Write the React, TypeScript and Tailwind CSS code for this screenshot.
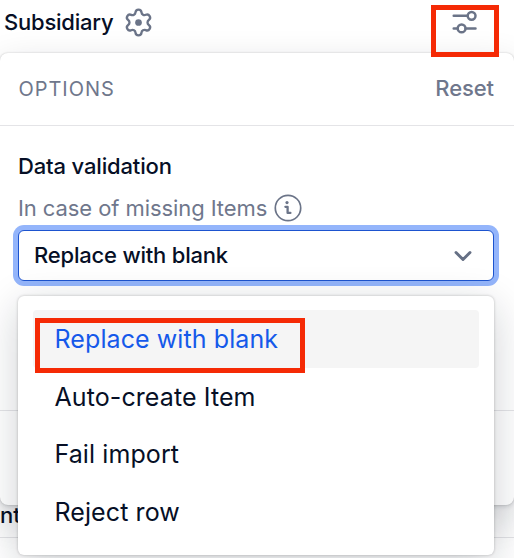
import { useState } from "react";
import clsx from "clsx";
import { ChevronDown } from "lucide-react";

const OPTIONS = ["Replace with blank", "Auto-create Item", "Fail import", "Reject row"];

function GearIcon() {
  return (
    <svg
      width="31"
      height="31"
      viewBox="0 0 24 24"
      fill="none"
      stroke="#6b7488"
      strokeWidth="1.8"
      strokeLinejoin="round"
    >
      <path d="M9.671 4.136a2.34 2.34 0 0 1 4.659 0 2.34 2.34 0 0 0 3.319 1.915 2.34 2.34 0 0 1 2.33 4.033 2.34 2.34 0 0 0 0 3.831 2.34 2.34 0 0 1-2.33 4.033 2.34 2.34 0 0 0-3.319 1.915 2.34 2.34 0 0 1-4.659 0 2.34 2.34 0 0 0-3.32-1.915 2.34 2.34 0 0 1-2.33-4.033 2.34 2.34 0 0 0 0-3.831A2.34 2.34 0 0 1 6.35 6.051a2.34 2.34 0 0 0 3.319-1.915" />
      <circle cx="12" cy="12" r="2.6" fill="#6b7488" stroke="none" />
    </svg>
  );
}

function SlidersIcon() {
  return (
    <svg
      width="26"
      height="26"
      viewBox="0 0 26 26"
      fill="none"
      stroke="#6b7488"
      strokeWidth="2.5"
      strokeLinecap="round"
    >
      <path d="M2.7 6.8H16.6M2.7 19.4H6.6M14.6 19.4H24.5" />
      <circle cx="20.6" cy="6.8" r="3.9" />
      <circle cx="10.6" cy="19.4" r="3.9" />
    </svg>
  );
}

function InfoIcon() {
  return (
    <svg width="28" height="28" viewBox="0 0 28 28" fill="none" stroke="#6b7488" strokeLinecap="round">
      <circle cx="14" cy="14" r="12.7" strokeWidth="1.7" />
      <circle cx="13" cy="8.6" r="1.6" fill="#6b7488" stroke="none" />
      <path d="M11.4 12.8H13.6V18.9H16.4" strokeWidth="2.3" strokeLinejoin="round" />
    </svg>
  );
}

export default function App() {
  const [selected, setSelected] = useState(OPTIONS[0]);

  return (
    <div className="relative h-[558px] w-[514px] overflow-hidden bg-white font-['Inter',sans-serif] text-[#060f26]">
      {/* Column header */}
      <div className="flex h-[53px] items-start justify-between pt-[7px] pr-[37px] pl-1">
        <div className="flex items-center gap-[10px] text-[22px] leading-[31px] font-medium tracking-[-0.22px]">
          <span className="w-[109px] whitespace-nowrap">Subsidiary</span>
          <GearIcon />
        </div>
        <button type="button" aria-label="Options" className="mt-[2px]">
          <SlidersIcon />
        </button>
      </div>

      {/* Options panel */}
      <div className="relative h-[452px] rounded-lg bg-white shadow-[0_0_2px_rgba(0,0,0,0.18),0_2px_4px_rgba(16,24,40,0.12),0_12px_36px_rgba(16,24,40,0.16)]">
        <div className="flex h-[73px] items-center justify-between border-b border-[#e4e4e7] pr-5 pb-px pl-[18.5px] text-[#6f778c]">
          <span className="text-[20px] tracking-[0.95px]">OPTIONS</span>
          <button type="button" className="text-[22px] font-medium tracking-[-0.1px]">
            Reset
          </button>
        </div>

        <div className="flex h-[285px] flex-col border-b border-[#e4e4e7] px-[18px] pt-[24px]">
          <h2 className="text-[22px] leading-[32px] font-medium tracking-[-0.15px]">Data validation</h2>
          <div className="mt-[11px] flex h-[30px] items-center gap-[7px] text-[22px] tracking-[-0.08px] text-[#6f778c]">
            <span>In case of missing Items</span>
            <InfoIcon />
          </div>
          <div className="relative mt-[7px]">
            <button
              type="button"
              className="flex h-[51px] w-[476px] items-center justify-between rounded-md border border-[#1d54cf] bg-white pr-[16px] pl-[15px] text-[22px] font-medium tracking-[-0.2px] ring-5 ring-[#94b5fb]"
            >
              {selected}
              <ChevronDown size={28} strokeWidth={2.5} color="#667085" />
            </button>

            {/* Dropdown menu */}
            <ul className="absolute top-[66px] left-0 z-10 h-[259px] w-[476px] rounded-md bg-white px-[15px] py-[14px] shadow-[0_0_3px_rgba(0,0,0,0.24),0_10px_40px_rgba(16,24,40,0.2)]">
              {OPTIONS.map((option) => (
                <li
                  key={option}
                  onClick={() => setSelected(option)}
                  className={clsx(
                    "flex h-[57.7px] cursor-pointer items-center rounded-sm pt-[2px] pl-[21.5px] text-[25px] tracking-[0.09px]",
                    option === selected && "bg-[#f5f5f5] text-[#1559ea]"
                  )}
                >
                  {option}
                </li>
              ))}
            </ul>
          </div>
        </div>
      </div>

      {/* Next row, partly covered by the menu */}
      <div className="h-[33px] border-b border-[#e4e4e7] text-[22px] leading-[20px] font-medium">nt</div>

      {/* Highlight marks */}
      <div className="absolute top-[5px] left-[431px] z-20 h-[52px] w-[68px] border-5 border-[#f52a05]" />
      <div className="absolute top-[318px] left-[35px] z-20 h-[55px] w-[270px] border-5 border-[#f52a05]" />
    </div>
  );
}
